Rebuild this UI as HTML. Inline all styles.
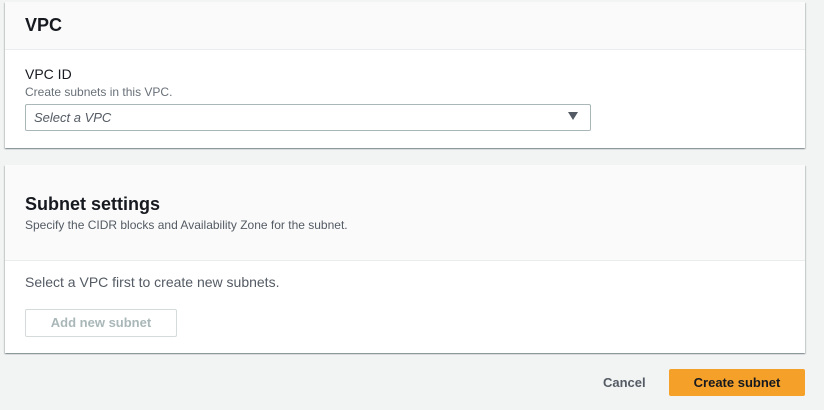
<!DOCTYPE html>
<html><head><style>
body{margin:0;width:824px;height:410px;background:#f2f3f3;font-family:"Liberation Sans",sans-serif;color:#16191f;position:relative;overflow:hidden}
.p{position:absolute;left:5px;width:800px;background:#fff;box-shadow:0 1px 1px rgba(0,28,36,.3),1px 1px 1px rgba(0,28,36,.15),-1px 1px 1px rgba(0,28,36,.15)}
.h{background:#fafafa;border-bottom:1px solid #eaeded}
.a{position:absolute;white-space:nowrap}
</style></head><body>
<div class="p" style="top:2px;height:146px">
 <div class="h" style="height:47px"></div>
 <div class="a" style="left:20px;top:13px;font-size:18px;font-weight:bold">VPC</div>
 <div class="a" style="left:20px;top:64px;font-size:14px">VPC ID</div>
 <div class="a" style="left:20px;top:83px;font-size:12px;color:#687078">Create subnets in this VPC.</div>
 <div class="a" style="left:20px;top:102px;width:564px;height:25px;border:1px solid #aab7b8;border-radius:2px"></div>
 <div class="a" style="left:29px;top:108px;font-size:13px;font-style:italic;color:#545b64">Select a VPC</div>
 <div class="a" style="left:563px;top:110px;width:0;height:0;border-left:5px solid transparent;border-right:5px solid transparent;border-top:8px solid #545b64"></div>
</div>
<div class="p" style="top:165px;height:188px">
 <div class="h" style="height:95px"></div>
 <div class="a" style="left:20px;top:29px;font-size:18px;font-weight:bold">Subnet settings</div>
 <div class="a" style="left:20px;top:53px;font-size:12px;color:#545b64">Specify the CIDR blocks and Availability Zone for the subnet.</div>
 <div class="a" style="left:20px;top:109px;font-size:14px;color:#545b64">Select a VPC first to create new subnets.</div>
 <div class="a" style="left:20px;top:144px;width:150px;height:26px;border:1px solid #d5dbdb;border-radius:2px;text-align:center;line-height:26px;font-size:13px;font-weight:bold;color:#aab7b8">Add new subnet</div>
</div>
<div class="a" style="left:603px;top:375px;font-size:13px;font-weight:bold;color:#545b64">Cancel</div>
<div class="a" style="left:669px;top:369px;width:136px;height:27px;background:#f4a029;border-radius:2px;text-align:center;line-height:27px;font-size:13px;font-weight:bold;color:#16191f">Create subnet</div>
</body></html>
